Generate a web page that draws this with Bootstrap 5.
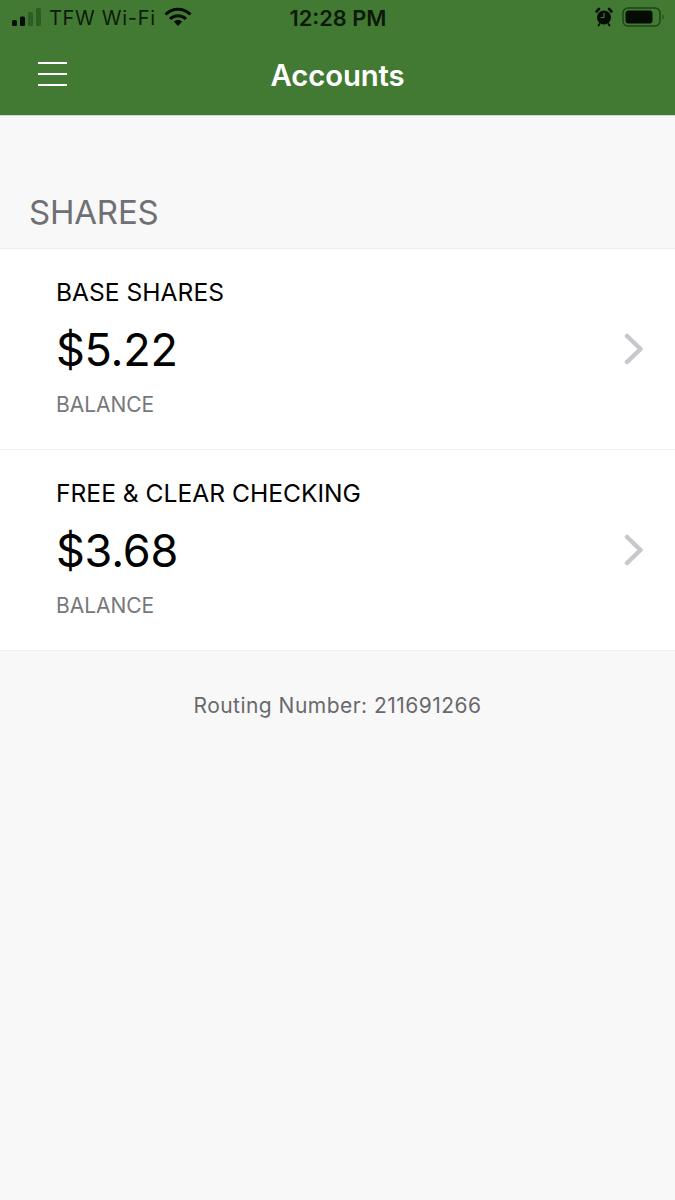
<!DOCTYPE html>
<html lang="en">
<head>
<meta charset="utf-8">
<title>Accounts</title>
<link href="https://cdn.jsdelivr.net/npm/bootstrap@5.3.0/dist/css/bootstrap.min.css" rel="stylesheet">
<style>
html,body{height:100%;}
body{background:#f8f8f8;font-family:Inter,"Liberation Sans",sans-serif;color:#000;}
.app-page{width:675px;height:1200px;overflow:hidden;}
.top-head{background:#427a33;height:116px;border-bottom:1px solid #d6d8d4;}
.stat-bar{height:37px;padding:0 10px 0 11px;color:#0c1a08;font-size:20px;line-height:37px;}
.stat-left,.stat-right{width:220px;}
.stat-time{font-size:21.800px;font-weight:600;text-align:center;}
.carrier{font-size:20px;letter-spacing:.7px;margin-left:7px;}
.stat-glyph{margin-top:-3px;}
.title-row{height:78px;padding-bottom:0;}
.burger{left:38px;top:25px;width:29px;height:24px;}
.burger span{display:block;height:2px;background:#fff;}
.page-title{color:#fff;font-size:29.300px;font-weight:600;letter-spacing:-.1px;margin:0;}
.section-label{font-size:33px;font-weight:400;color:#6f6f74;padding:77px 0 0 29px;height:132px;line-height:38px;margin:0;letter-spacing:-.2px;}
.acct-list{background:#fff;border-top:1px solid #ececec;border-bottom:1px solid #f0f0f0;}
.acct-row{height:200px;padding:0 31px 0 56px;}
.acct-row+.acct-row{border-top:1px solid #f0f0f0;height:201px;}
.acct-name{font-size:24.600px;line-height:28px;margin-top:29px;color:#000;}
.acct-amt{font-size:45px;line-height:54px;margin-top:17px;font-weight:400;letter-spacing:-.25px;}
.acct-bal{font-size:21px;line-height:26px;margin-top:15px;color:#77777b;letter-spacing:-.05px;}
.routing{font-size:21px;color:#69696d;text-align:center;margin-top:42px;line-height:26px;letter-spacing:.47px;}
</style>
</head>
<body>
<div class="app-page d-flex flex-column">
  <header class="top-head">
    <div class="stat-bar d-flex align-items-center justify-content-between">
      <div class="stat-left d-flex align-items-center text-nowrap">
        <svg class="stat-glyph" width="31" height="20" viewBox="0 0 31 20" aria-hidden="true"><rect x="1" y="13" width="5" height="6" rx="1.5" fill="#050c03"/><rect x="9" y="9.500" width="5" height="9.500" rx="1.500" fill="#050c03"/><rect x="17" y="5" width="5" height="14" rx="1.500" fill="#2d5d22"/><rect x="25" y="1" width="5" height="18" rx="1.500" fill="#2d5d22"/></svg>
        <span class="carrier">TFW Wi-Fi</span>
        <svg class="ms-2 stat-glyph" width="28" height="20" viewBox="0 0 28 20" aria-hidden="true"><path d="M1.500 7.500C8.500 .5 19.500 .5 26.500 7.500" fill="none" stroke="#050c03" stroke-width="3"/><path d="M6 12C10.500 7.700 17.500 7.700 22 12" fill="none" stroke="#050c03" stroke-width="3"/><path d="M9.800 14.600C12.200 12.500 15.800 12.500 18.200 14.600L14 19Z" fill="#050c03"/></svg>
      </div>
      <div class="stat-time">12:28 PM</div>
      <div class="stat-right d-flex align-items-center justify-content-end">
        <svg class="stat-glyph" width="20" height="20" viewBox="0 0 20 20" aria-hidden="true"><circle cx="10" cy="10.500" r="7" fill="#050c03"/><path d="M10 6V10.500H6.500" fill="none" stroke="#427a33" stroke-width="1.200"/><path d="M2.500 4.500 5 2M17.500 4.500 15 2" stroke="#050c03" stroke-width="2.600" stroke-linecap="round"/><path d="M5.500 17 4.500 18.500M14.500 17 15.500 18.500" stroke="#050c03" stroke-width="1.800" stroke-linecap="round"/></svg>
        <svg class="ms-2 stat-glyph" width="43" height="20" viewBox="0 0 43 20" aria-hidden="true"><rect x="1" y="1" width="37" height="18" rx="5" fill="none" stroke="#1f4416" stroke-width="1.500"/><rect x="3.500" y="3.500" width="27" height="13" rx="3" fill="#050c03"/><path d="M40.500 7.500c1.500.5 1.500 4.500 0 5z" fill="#1f4416"/></svg>
      </div>
    </div>
    <div class="title-row position-relative d-flex align-items-center justify-content-center">
      <div class="burger position-absolute d-flex flex-column justify-content-between"><span></span><span></span><span></span></div>
      <h1 class="page-title">Accounts</h1>
    </div>
  </header>
  <h2 class="section-label">SHARES</h2>
  <div class="acct-list">
    <div class="acct-row d-flex align-items-center justify-content-between">
      <div class="align-self-start">
        <div class="acct-name">BASE SHARES</div>
        <div class="acct-amt">$5.22</div>
        <div class="acct-bal">BALANCE</div>
      </div>
      <svg width="20" height="32" viewBox="0 0 20 32" aria-hidden="true"><path d="M3 3 16.500 16 3 29" fill="none" stroke="#c7c7cc" stroke-width="4.500" stroke-linecap="round" stroke-linejoin="round"/></svg>
    </div>
    <div class="acct-row d-flex align-items-center justify-content-between">
      <div class="align-self-start">
        <div class="acct-name">FREE &amp; CLEAR CHECKING</div>
        <div class="acct-amt">$3.68</div>
        <div class="acct-bal">BALANCE</div>
      </div>
      <svg width="20" height="32" viewBox="0 0 20 32" aria-hidden="true"><path d="M3 3 16.500 16 3 29" fill="none" stroke="#c7c7cc" stroke-width="4.500" stroke-linecap="round" stroke-linejoin="round"/></svg>
    </div>
  </div>
  <div class="routing">Routing Number: 211691266</div>
</div>
<script src="https://cdn.jsdelivr.net/npm/bootstrap@5.3.0/dist/js/bootstrap.bundle.min.js"></script>
</body>
</html>
